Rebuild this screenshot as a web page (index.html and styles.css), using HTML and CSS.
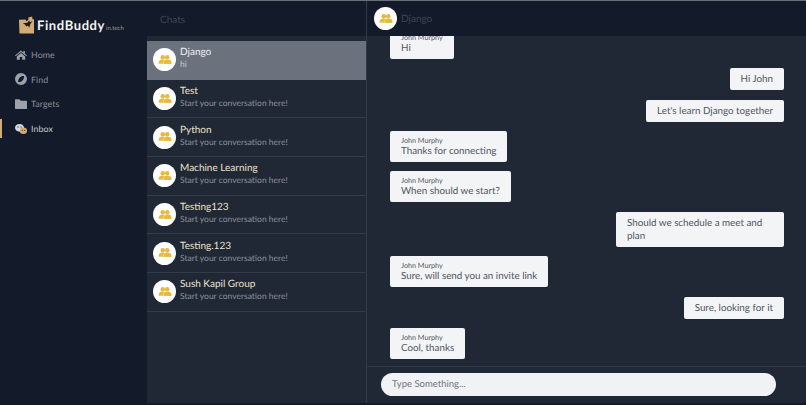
FILE: index.html
```html
<!DOCTYPE html>
<html lang="en">
<head>
    <meta charset="UTF-8">
    <title>FindBuddy Inbox</title>
    <link rel="stylesheet" href="styles.css">
</head>
<body>
    <svg class="icon-defs" width="0" height="0">
        <symbol id="group" viewBox="0 0 24 24">
            <circle cx="8.2" cy="7.2" r="3.9"/>
            <circle cx="15.8" cy="7.2" r="3.9"/>
            <path d="M1 17c0-3.600 2.800-5.800 6.600-5.800 1.600 0 3 .5 3.900 1.500-1.500 1-2.300 2.500-2.400 4.600H1z"/>
            <path d="M23 15.500c0-2.500-3-4.300-7-4.300-3.600 0-6 1.900-6 4.600v2.700h13z"/>
            <path d="M1 17.500h22v1.200H1z"/>
        </symbol>
    </svg>
    <div class="app">
        <aside class="sidebar">
            <div class="brand">
                <svg class="brand-logo" viewBox="0 0 16 18">
                    <path fill="#d2ab78" d="M0 3.500l7-.5 1 2 2-1.500V1l4-1 .5 3 1.500-.5V18H.5z"/>
                    <path fill="#1a1a1e" d="M4 7l5-.5 2-2.500.5 2 3-1-2.500 3-1 4-1.500-2.500-2 1-1-2z"/>
                </svg>
                <span class="brand-name">FindBuddy</span><span class="brand-tld">in.tech</span>
            </div>
            <nav class="nav">
                <a class="nav-item" href="#">
                    <svg class="nav-icon" viewBox="0 0 20 18"><path d="M10 1.500 0 10l1 1.200L10 3.800l9 7.400 1-1.200-3.500-3V2.500h-2.500v2.200zM3 11.500V17h5v-4.500h4V17h5v-5.500l-7-5.700z"/></svg>
                    Home
                </a>
                <a class="nav-item" href="#">
                    <svg class="nav-icon" viewBox="0 0 20 20"><path fill-rule="evenodd" d="M10 0a10 10 0 1 0 0 20 10 10 0 0 0 0-20zM5 14.500c.4-3.500 2.200-7.700 5.500-8.800 1.700-.6 4-.7 4.500-.2.400 3.500-2 8-5 9-1.700.6-4.400.6-5 0z"/></svg>
                    Find
                </a>
                <a class="nav-item" href="#">
                    <svg class="nav-icon" viewBox="0 0 20 18"><path d="M1.500 1h6l2 2.500h9c.8 0 1.500.7 1.500 1.500v11c0 .8-.7 1.500-1.500 1.500h-17C.7 17.500 0 16.800 0 16V2.500C0 1.700.7 1 1.500 1z"/></svg>
                    Targets
                </a>
                <a class="nav-item nav-item-active" href="#">
                    <svg class="nav-icon" viewBox="0 0 20 18">
                        <ellipse cx="7.500" cy="7" rx="7.500" ry="6.500" fill="#d9dbe0"/>
                        <ellipse cx="14" cy="12" rx="6" ry="5.500" fill="#d2ab78"/>
                        <circle cx="5" cy="5.500" r="1" fill="#131a29"/>
                        <circle cx="10" cy="5.500" r="1" fill="#131a29"/>
                        <circle cx="12" cy="11" r=".9" fill="#131a29"/>
                        <circle cx="16" cy="11" r=".9" fill="#131a29"/>
                    </svg>
                    Inbox
                </a>
            </nav>
        </aside>

        <section class="chats">
            <header class="bar bar-chats">Chats</header>
            <ul class="chat-list">
                <li class="chat-row chat-row-active">
                    <span class="avatar"><svg class="avatar-icon"><use href="#group"/></svg></span>
                    <div class="chat-info"><h3>Django</h3><p>hi</p></div>
                </li>
                <li class="chat-row">
                    <span class="avatar"><svg class="avatar-icon"><use href="#group"/></svg></span>
                    <div class="chat-info"><h3>Test</h3><p>Start your conversation here!</p></div>
                </li>
                <li class="chat-row">
                    <span class="avatar"><svg class="avatar-icon"><use href="#group"/></svg></span>
                    <div class="chat-info"><h3>Python</h3><p>Start your conversation here!</p></div>
                </li>
                <li class="chat-row">
                    <span class="avatar"><svg class="avatar-icon"><use href="#group"/></svg></span>
                    <div class="chat-info"><h3>Machine Learning</h3><p>Start your conversation here!</p></div>
                </li>
                <li class="chat-row">
                    <span class="avatar"><svg class="avatar-icon"><use href="#group"/></svg></span>
                    <div class="chat-info"><h3>Testing123</h3><p>Start your conversation here!</p></div>
                </li>
                <li class="chat-row">
                    <span class="avatar"><svg class="avatar-icon"><use href="#group"/></svg></span>
                    <div class="chat-info"><h3>Testing.123</h3><p>Start your conversation here!</p></div>
                </li>
                <li class="chat-row">
                    <span class="avatar"><svg class="avatar-icon"><use href="#group"/></svg></span>
                    <div class="chat-info"><h3>Sush Kapil Group</h3><p>Start your conversation here!</p></div>
                </li>
            </ul>
        </section>

        <section class="conversation">
            <header class="bar bar-conversation">
                <span class="avatar"><svg class="avatar-icon"><use href="#group"/></svg></span>
                Django
            </header>
            <div class="messages">
                <div class="msg msg-in"><span class="msg-author">John Murphy</span>Hi</div>
                <div class="msg msg-out">Hi John</div>
                <div class="msg msg-out">Let's learn Django together</div>
                <div class="msg msg-in"><span class="msg-author">John Murphy</span>Thanks for connecting</div>
                <div class="msg msg-in"><span class="msg-author">John Murphy</span>When should we start?</div>
                <div class="msg msg-out msg-wide">Should we schedule a meet and plan</div>
                <div class="msg msg-in"><span class="msg-author">John Murphy</span>Sure, will send you an invite link</div>
                <div class="msg msg-out">Sure, looking for it</div>
                <div class="msg msg-in"><span class="msg-author">John Murphy</span>Cool, thanks</div>
            </div>
            <footer class="composer">
                <input class="composer-input" type="text" placeholder="Type Something...">
            </footer>
        </section>
    </div>
</body>
</html>
```

FILE: styles.css
```css
:root {
    --color-dark: #131a29;
    --color-panel: #202836;
    --color-line: #323a48;
    --color-muted: #8b909b;
    --color-tan: #d2ab78;
    --color-bubble: #f3f4f6;
}
* {
    box-sizing: border-box;
}
html, body {
    height: 100%;
}
body {
    margin: 0;
    background-color: var(--color-dark);
    font-family: 'Lato', 'Open Sans', sans-serif;
    text-rendering: geometricPrecision;
    overflow: hidden;
}
.icon-defs {
    position: absolute;
}
.app {
    display: flex;
    height: 403px;
    border-top: 1px solid #6b7078;
}
.sidebar {
    width: 147px;
    flex-shrink: 0;
    background-color: var(--color-dark);
}
.brand {
    display: flex;
    align-items: flex-end;
    height: 33px;
    padding: 13px 0 0 19px;
}
.brand-logo {
    width: 15px;
    height: 18px;
    margin-right: 3px;
    flex-shrink: 0;
}
.brand-name {
    color: #f4f4f4;
    font-size: 13px;
    font-weight: 700;
    letter-spacing: 0.6px;
    line-height: 18px;
}
.brand-tld {
    color: #9a9da5;
    font-size: 6px;
    margin-bottom: 2px;
    margin-left: 1px;
}
.nav {
    margin-top: 11px;
}
.nav-item {
    display: flex;
    align-items: center;
    gap: 4px;
    height: 19px;
    margin-bottom: 5.700px;
    padding-left: 15px;
    color: #8b909b;
    font-size: 8.800px;
    letter-spacing: 0.1px;
    text-decoration: none;
    fill: #9ba0a9;
}
.nav-item-active {
    color: #c9ccd2;
    box-shadow: inset 2px 0 0 var(--color-tan);
}
.nav-icon {
    width: 12px;
    height: 12px;
    flex-shrink: 0;
}
.chats {
    width: 220px;
    flex-shrink: 0;
    display: flex;
    flex-direction: column;
    background-color: var(--color-panel);
    border-right: 1px solid var(--color-line);
}
.bar {
    height: 35px;
    flex-shrink: 0;
    display: flex;
    align-items: center;
    background-color: var(--color-dark);
    color: #3f4654;
    font-size: 10px;
}
.bar-chats {
    padding: 3px 0 0 13px;
}
.bar-conversation {
    gap: 4px;
    padding-left: 7px;
}
.chat-list {
    list-style: none;
    margin: 5px 0 0;
    padding: 0;
}
.chat-row {
    display: flex;
    align-items: center;
    gap: 4px;
    height: 38.700px;
    padding-left: 6px;
    border-bottom: 1px solid var(--color-line);
}
.chat-row-active {
    background-color: #6c717e;
    border-bottom-color: #6c717e;
}
.avatar {
    width: 23px;
    height: 23px;
    flex-shrink: 0;
    display: flex;
    align-items: center;
    justify-content: center;
    background-color: #fff;
    border-radius: 50%;
}
.avatar-icon {
    width: 14px;
    height: 14px;
    fill: #e8b93f;
}
.chat-info {
    padding-bottom: 3px;
}
.chat-info h3 {
    margin: 0 0 1px;
    color: #eee3c9;
    font-size: 10px;
    font-weight: 400;
    line-height: 12px;
}
.chat-info p {
    margin: 0;
    color: var(--color-muted);
    font-size: 8.500px;
    line-height: 11px;
}
.chat-row-active h3 {
    color: #f2f2f2;
}
.chat-row-active p {
    color: #c9ccd2;
}
.conversation {
    flex: 1;
    display: flex;
    flex-direction: column;
    min-width: 0;
    background-color: var(--color-panel);
    border-bottom-right-radius: 4px;
}
.messages {
    flex: 1;
    min-height: 0;
    display: flex;
    flex-direction: column;
    justify-content: flex-end;
    align-items: flex-start;
    gap: 9.400px;
    padding: 0 22px 7px 23px;
    overflow: hidden;
}
.msg {
    flex-shrink: 0;
    padding: 5px 11px 4px;
    background-color: var(--color-bubble);
    border-radius: 2px;
    color: #50555f;
    font-size: 9.800px;
    line-height: 13px;
}
.msg-author {
    display: block;
    font-size: 7.200px;
    line-height: 9px;
}
.msg-out {
    align-self: flex-end;
}
.msg-wide {
    width: 168px;
}
.composer {
    height: 37px;
    flex-shrink: 0;
    padding: 6px 30px 0 14px;
    border-top: 1px solid var(--color-line);
}
.composer-input {
    display: block;
    width: 100%;
    height: 23px;
    padding: 0 11px;
    background-color: #f1f2f5;
    border: 0;
    border-radius: 12px;
    font-family: inherit;
    font-size: 9.500px;
    text-rendering: geometricPrecision;
}
.composer-input::placeholder {
    color: #6f747e;
}
```
